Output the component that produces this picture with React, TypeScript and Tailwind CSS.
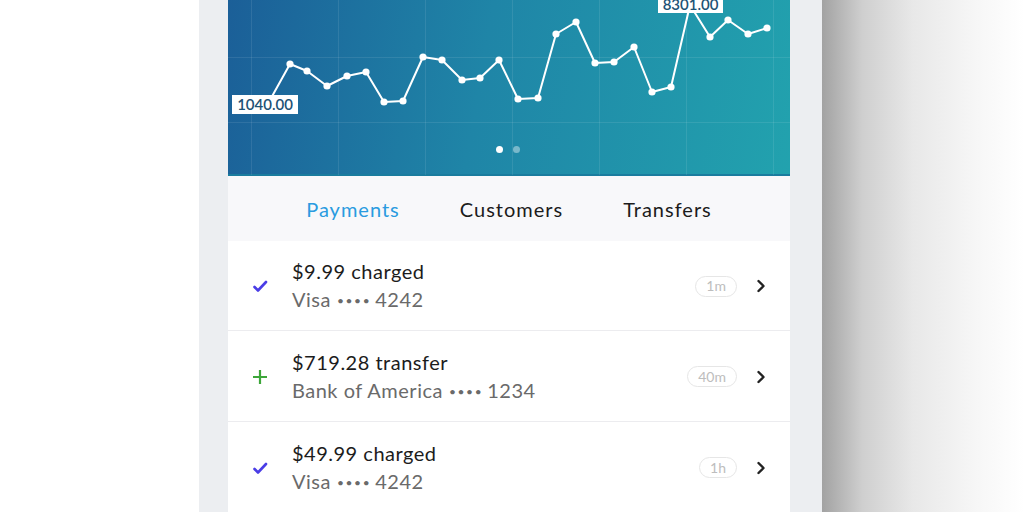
import React from "react";

const pts: [number, number][] = [
  [62, 64], [79, 71], [99, 86], [119, 76], [138, 72], [156, 102], [175, 101],
  [195, 57], [214, 60], [234, 80], [252, 78], [271, 60], [290, 99], [310, 98],
  [328, 34], [348, 22], [367, 63], [386, 62], [406, 47], [424, 92], [443, 87],
  [462, 5], [482, 37], [500, 20], [520, 34], [539, 28],
];

function Chart() {
  const d = "M 42 100 L " + pts.map((p) => p.join(" ")).join(" L ");
  const vlines = [23, 110, 197, 284, 371, 458, 545];
  const hlines = [57, 122];
  return (
    <div className="relative h-[177px] bg-[linear-gradient(100deg,#1b5f98_0%,#1f85a7_45%,#22a2ae_100%)] border-b-2 border-[#1a7c9e]">
      <svg className="absolute inset-0" width="562" height="175" viewBox="0 0 562 175">
        {vlines.map((x) => (
          <line key={x} x1={x + 0.5} y1={0} x2={x + 0.5} y2={175} stroke="rgba(255,255,255,0.09)" strokeWidth={1} />
        ))}
        {hlines.map((y) => (
          <line key={y} x1={0} y1={y + 0.5} x2={562} y2={y + 0.5} stroke="rgba(255,255,255,0.09)" strokeWidth={1} />
        ))}
        <path d={d} fill="none" stroke="white" strokeWidth={2} strokeLinejoin="round" />
        {pts.map(([x, y], i) => (
          <circle key={i} cx={x} cy={y} r={3.6} fill="white" />
        ))}
      </svg>
      <div className="absolute left-[4px] top-[95px] h-[19px] w-[66px] bg-white flex items-center justify-center text-[15px] font-semibold text-[#1d5275] leading-none [font-family:Lato,sans-serif]">
        1040.00
      </div>
      <div className="absolute left-[430px] top-[-5px] h-[18px] w-[65px] bg-white flex items-center justify-center text-[15px] font-semibold text-[#1d5275] leading-none [font-family:Lato,sans-serif]">
        8301.00
      </div>
      <div className="absolute left-[268px] top-[146px] flex gap-[10px]">
        <div className="w-[7px] h-[7px] rounded-full bg-white" />
        <div className="w-[7px] h-[7px] rounded-full bg-white/40" />
      </div>
    </div>
  );
}

function Check() {
  return (
    <svg width="18" height="18" viewBox="0 0 18 18">
      <path d="M3.5 10 L7 13.5 L15 5" fill="none" stroke="#4a3de6" strokeWidth={2.6} strokeLinecap="round" strokeLinejoin="round" />
    </svg>
  );
}

function Plus() {
  return (
    <svg width="18" height="18" viewBox="0 0 18 18">
      <path d="M9 2 V16 M2 9 H16" fill="none" stroke="#3da63a" strokeWidth={2.2} />
    </svg>
  );
}

function Chevron() {
  return (
    <svg width="12" height="14" viewBox="0 0 12 14">
      <path d="M3.5 2 L8.5 7 L3.5 12" fill="none" stroke="#222" strokeWidth={2.4} strokeLinecap="round" strokeLinejoin="round" />
    </svg>
  );
}

function Dots() {
  return <span className="text-[12px] tracking-[1.6px] align-[2px] ml-[6px] mr-[4px]">••••</span>;
}

type RowProps = { icon: React.ReactNode; title: string; subA: string; subB: string; badge: string; last?: boolean };

function Row({ icon, title, subA, subB, badge, last }: RowProps) {
  return (
    <div className={"flex items-center h-[91px] pl-[23px] pr-[23px] pt-[2px] bg-white " + (last ? "" : "border-b border-[#ececef]")}>
      <div className="w-[18px] flex justify-center">{icon}</div>
      <div className="ml-[23px] flex flex-col flex-1 [font-family:Lato,sans-serif] text-[20px] leading-[28px] tracking-[0.5px]">
        <div className="text-[#1c1c1c]">{title}</div>
        <div className="text-[#6a6a6a]">
          {subA}
          <Dots />
          {subB}
        </div>
      </div>
      <div className="h-[21px] px-[10px] rounded-full border-[1.5px] border-[#e6e6e6] flex items-center text-[14px] text-[#bdbdbd] [font-family:Lato,sans-serif] leading-none">
        {badge}
      </div>
      <div className="ml-[18px] flex items-center">
        <Chevron />
      </div>
    </div>
  );
}

export default function App() {
  return (
    <div className="w-[1024px] h-[512px] bg-white flex overflow-hidden">
      <div className="w-[199px] shrink-0" />
      <div className="w-[623px] shrink-0 bg-[#eceef1] pl-[29px] pr-[32px]">
        <div className="w-[562px] h-full flex flex-col bg-white">
          <Chart />
          <div className="h-[65px] bg-[#f8f8fa] flex items-center justify-center gap-[60px] text-[20px] tracking-[1px] [font-family:Lato,sans-serif] pt-[1px]">
            <span className="text-[#2a9be0]">Payments</span>
            <span className="text-[#1c1c1c]">Customers</span>
            <span className="text-[#1c1c1c]">Transfers</span>
          </div>
          <Row icon={<Check />} title="$9.99 charged" subA="Visa" subB="4242" badge="1m" />
          <Row icon={<Plus />} title="$719.28 transfer" subA="Bank of America" subB="1234" badge="40m" />
          <Row icon={<Check />} title="$49.99 charged" subA="Visa" subB="4242" badge="1h" last />
        </div>
      </div>
      <div className="flex-1 bg-[linear-gradient(90deg,#a2a2a2_0%,#cfcfcf_20%,#e8e8e8_45%,#f6f6f6_75%,#ffffff_100%)]" />
    </div>
  );
}
